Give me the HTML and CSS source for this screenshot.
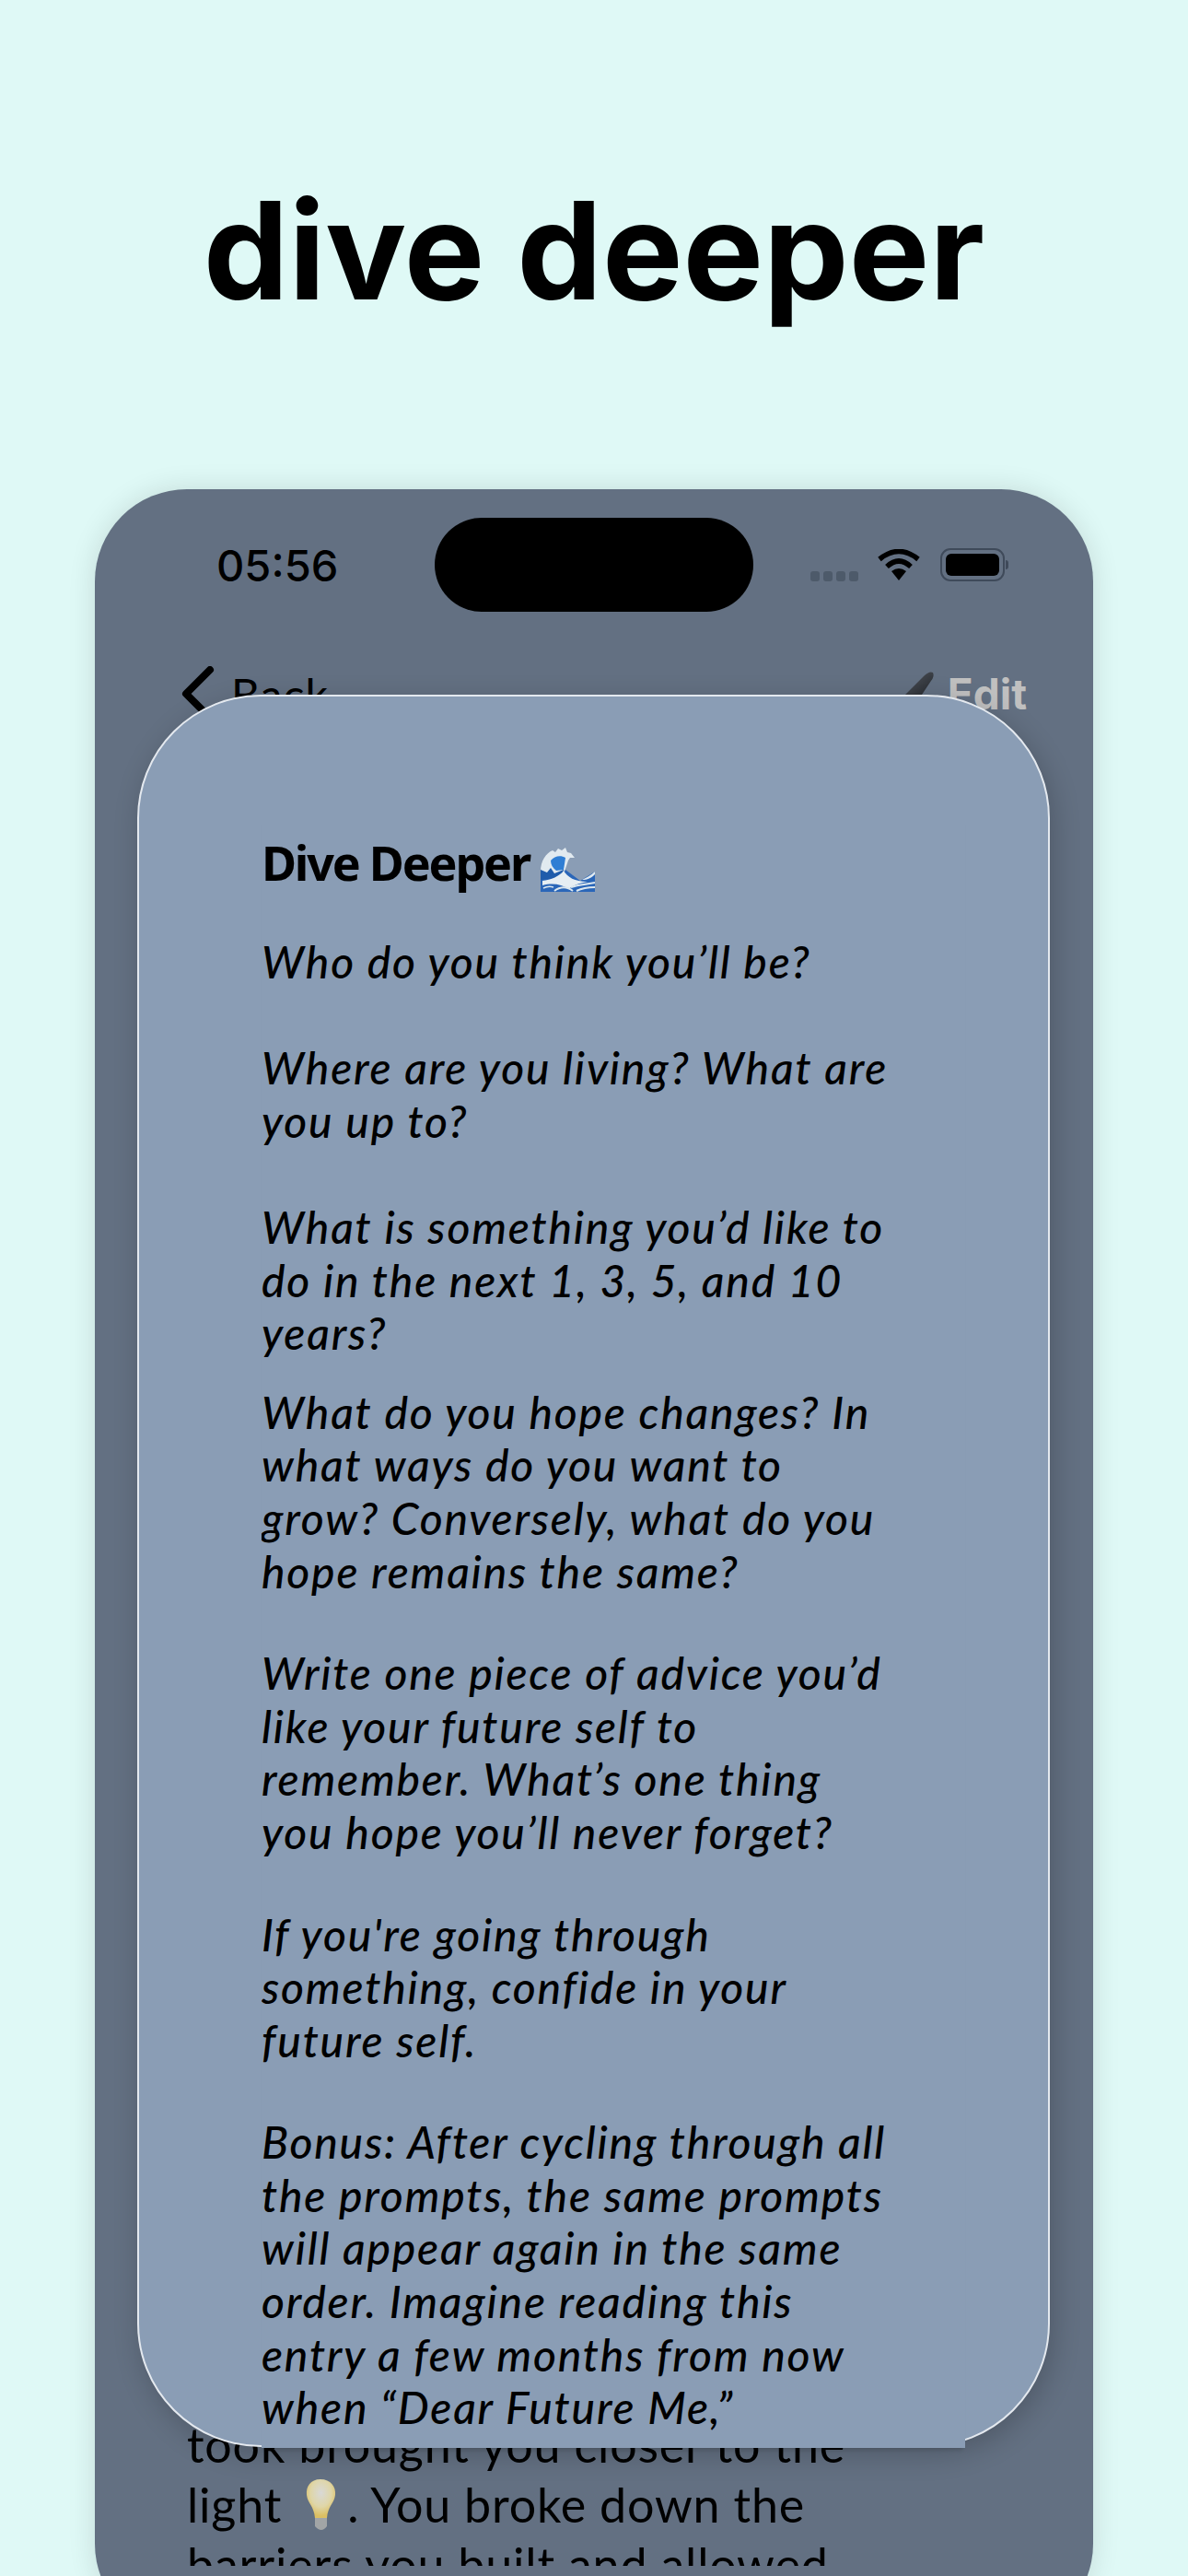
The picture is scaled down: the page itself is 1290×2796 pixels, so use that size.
FILE: index.html
```html
<!DOCTYPE html>
<html lang="en">
<head>
  <meta charset="UTF-8" />
  <title>dive deeper</title>
  <link rel="stylesheet" href="styles.css">
</head>
<body>
  <h1 class="headline">dive deeper</h1>

  <div class="phone">
    <div class="status-bar">
      <span class="time">05:56</span>
      <div class="island"></div>
      <div class="status-icons">
        <div class="signal"><i></i><i></i><i></i><i></i></div>
        <svg class="wifi" viewBox="0 0 46 34" width="46" height="34">
          <path d="M23 34 L15 24 Q23 18 31 24 Z" fill="#000"/>
          <path d="M10 19 Q23 7 36 19" fill="none" stroke="#000" stroke-width="5.5"/>
          <path d="M2 11 Q23 -6 44 11" fill="none" stroke="#000" stroke-width="5.5"/>
        </svg>
        <div class="battery"><div class="battery-fill"></div></div>
        <div class="battery-cap"></div>
      </div>
    </div>

    <div class="nav-row">
      <div class="back">
        <svg viewBox="0 0 36 60" width="36" height="60">
          <path d="M31 4 L5 30 L31 56" fill="none" stroke="#000" stroke-width="8" stroke-linecap="round" stroke-linejoin="round"/>
        </svg>
        <span>Back</span>
      </div>
      <div class="edit">
        <svg viewBox="0 0 50 50" width="50" height="50">
          <defs>
            <linearGradient id="pencil" x1="0" y1="0" x2="1" y2="1">
              <stop offset="0" stop-color="#565b63"/>
              <stop offset="1" stop-color="#1f2227"/>
            </linearGradient>
          </defs>
          <path d="M2 32 L28 6 Q34 0 38 2 Q40 6 36 11 L22 32 Z" fill="url(#pencil)"/>
        </svg>
        <span>Edit</span>
      </div>
    </div>

    <div class="entry-text">
      <p>took brought you closer to the</p>
      <p>light <svg class="bulb" viewBox="0 0 34 60" width="34" height="60">
        <defs>
          <radialGradient id="glass" cx="0.5" cy="0.35" r="0.6">
            <stop offset="0" stop-color="#d9d9d6"/>
            <stop offset="0.6" stop-color="#dfd6a8"/>
            <stop offset="1" stop-color="#dcbf62"/>
          </radialGradient>
        </defs>
        <path d="M17 1 C28 1 34 9 33 18 C32 27 25 30 24 43 L11 43 C10 30 3 27 2 18 C1 9 6 1 17 1 Z" fill="url(#glass)"/>
        <path d="M11 43 H24 V52 Q18 60 11 52 Z" fill="#a2a5a6"/>
      </svg>. You broke down the</p>
      <p>barriers you built and allowed</p>
    </div>

    <div class="modal">
      <svg class="close" viewBox="0 0 34 34" width="34" height="34">
        <path d="M2 2 L32 32 M32 2 L2 32" stroke="#4d5f73" stroke-width="2.5" stroke-linecap="round"/>
      </svg>
      <div class="modal-content">
        <h2 class="modal-title">Dive Deeper <svg class="wave" viewBox="0 0 60 48" width="60" height="48">
          <path d="M1 24 H28 L44 36 L60 26 V48 H1 Z" fill="#2a66b8"/>
          <path d="M1 26 C1 14 7 6 14 3 L17 5 L20 1 L24 3 L28 0 L30 5 L34 6 L38 11 L33 11 L31 14 L27 26 L14 30 L5 28 Z" fill="#e1eaf0"/>
          <path d="M12 14 C16 9 23 8 28 11 L26 24 L18 25 C14 22 12 18 12 14 Z" fill="#2f7ed4"/>
          <path d="M1 24 L8 27 L12 22 L16 28 L26 24 L28 32 L1 35 Z" fill="#1f5cab"/>
          <path d="M3 36 C12 35 22 31 26 25 C30 32 38 37 52 37 C42 39 36 41 32 45 C24 40 14 38 3 41 Z" fill="#e6eef3"/>
          <path d="M46 35 C50 33 56 30 60 26 V29 C56 33 52 35 46 35 Z" fill="#e1eaf0"/>
          <path d="M16 47 C22 42 30 42 36 47 M34 43 C42 40 50 40 60 38 M40 47 C46 44 52 43 60 43" fill="none" stroke="#dce7ee" stroke-width="2"/>
          <path d="M4 44 C8 42 12 42 15 43" fill="none" stroke="#dce7ee" stroke-width="1.5"/>
        </svg></h2>
        <p class="prompt wide">Who do you think you’ll be?</p>
        <p class="prompt wide">Where are you living? What are you up to?</p>
        <p class="prompt tight">What is something you’d like to do in the next 1, 3, 5, and 10 years?</p>
        <p class="prompt">What do you hope changes? In what ways do you want to grow? Conversely, what do you hope remains the same?</p>
        <p class="prompt">Write one piece of advice you’d like your future self to remember. What’s one thing you hope you’ll never forget?</p>
        <p class="prompt">If you're going through something, confide in your future self.</p>
        <p class="prompt">Bonus: After cycling through all the prompts, the same prompts will appear again in the same order. Imagine reading this entry a few months from now when “Dear Future Me,”</p>
      </div>
    </div>
  </div>
</body>
</html>
```

FILE: styles.css
```css
html, body {
  margin: 0;
  padding: 0;
}
body {
  width: 1290px;
  height: 2796px;
  overflow: hidden;
  background: #dff9f6;
  font-family: "Lato", sans-serif;
  color: #000;
}
.headline {
  margin: 0;
  padding-top: 187px;
  height: 531px;
  box-sizing: border-box;
  text-align: center;
  font-family: "Inter", sans-serif;
  font-size: 147px;
  line-height: 170px;
  font-weight: 700;
}
.phone {
  position: relative;
  width: 1084px;
  height: 2330px;
  margin-left: 103px;
  border-radius: 100px;
  background: #637082;
  box-shadow: 0 0 30px rgba(0, 0, 0, 0.12);
}
.status-bar {
  display: flex;
  align-items: center;
  height: 134px;
  padding-top: 15px;
}
.time {
  width: 369px;
  padding-left: 132px;
  box-sizing: border-box;
  font-family: "Inter", sans-serif;
  font-size: 47px;
  font-weight: 500;
}
.island {
  width: 346px;
  height: 102px;
  border-radius: 51px;
  background: #000;
}
.status-icons {
  display: flex;
  align-items: center;
  margin-left: 62px;
  gap: 18px;
}
.signal {
  display: flex;
  gap: 4px;
  align-self: flex-end;
  margin-right: 3px;
}
.signal i {
  width: 10px;
  height: 11px;
  border-radius: 3px;
  background: #4d5a6a;
}
.battery {
  width: 70px;
  height: 36px;
  margin-left: 4px;
  border: 2px solid #3f4a5a;
  border-radius: 11px;
  padding: 4px;
  box-sizing: border-box;
}
.battery-fill {
  height: 100%;
  border-radius: 6px;
  background: #000;
}
.battery-cap {
  width: 3px;
  height: 10px;
  margin-left: -17px;
  border-radius: 0 3px 3px 0;
  background: #3f4a5a;
}
.nav-row {
  display: flex;
  justify-content: space-between;
  align-items: center;
  padding: 43px 72px 0 94px;
}
.back, .edit {
  display: flex;
  align-items: center;
  gap: 18px;
  font-size: 48px;
  letter-spacing: 1px;
}
.edit {
  font-family: "Inter", sans-serif;
  font-weight: 700;
  font-size: 46px;
  letter-spacing: 0;
  color: #c0c0c0;
  gap: 4px;
}
.entry-text {
  position: absolute;
  left: 100px;
  top: 2090px;
  height: 164px;
  overflow: hidden;
  font-size: 52px;
  line-height: 65px;
  letter-spacing: 0.8px;
}
.entry-text p {
  margin: 0;
  white-space: nowrap;
}
.bulb {
  margin: 0 12px 0 11px;
  vertical-align: -12px;
}
.modal {
  position: absolute;
  left: 46px;
  top: 223px;
  width: 991px;
  height: 1902px;
  box-sizing: border-box;
  border: 2px solid #e4e9ef;
  border-radius: 134px;
  background: #8a9db5;
  box-shadow: 4px 8px 30px rgba(0, 0, 0, 0.2);
}
.close {
  position: absolute;
  right: 112px;
  top: 144px;
}
.modal-content {
  position: absolute;
  left: 133px;
  top: 132px;
  width: 764px;
  height: 1769px;
  box-sizing: border-box;
  padding-top: 15px;
  background: #8a9db5;
  box-shadow: 0 5px 4px -3px rgba(0, 0, 0, 0.15);
  overflow: hidden;
}
.modal-title {
  margin: 0 0 46px;
  font-family: "Noto Sans", sans-serif;
  font-size: 52px;
  line-height: 66px;
  font-weight: 700;
  letter-spacing: -2.2px;
}
.wave {
  vertical-align: -12px;
}
.prompt {
  margin: 0 0 53px;
  width: 690px;
  font-size: 48px;
  line-height: 57.6px;
  letter-spacing: 1.8px;
  font-style: italic;
  font-weight: 500;
}
.prompt.wide {
  margin-bottom: 57.6px;
}
.prompt.tight {
  margin-bottom: 28px;
}
```
